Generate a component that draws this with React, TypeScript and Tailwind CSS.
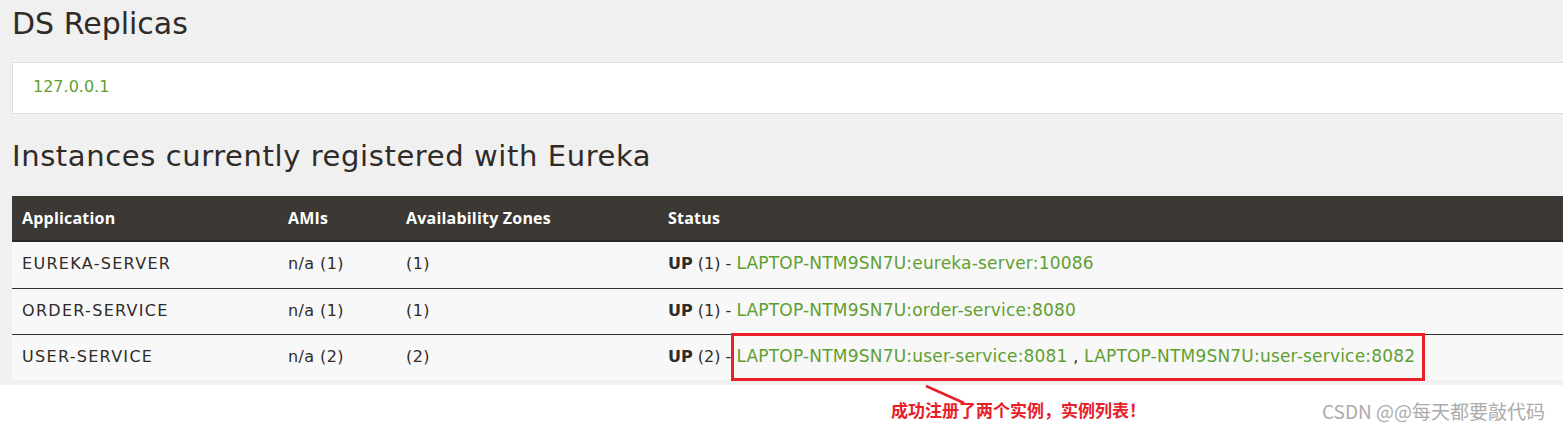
import React from "react";

const rows = [
  { app: "EUREKA-SERVER", amis: "n/a (1)", zones: "(1)", count: "(1)", links: ["LAPTOP-NTM9SN7U:eureka-server:10086"] },
  { app: "ORDER-SERVICE", amis: "n/a (1)", zones: "(1)", count: "(1)", links: ["LAPTOP-NTM9SN7U:order-service:8080"] },
  { app: "USER-SERVICE", amis: "n/a (2)", zones: "(2)", count: "(2)", links: ["LAPTOP-NTM9SN7U:user-service:8081", "LAPTOP-NTM9SN7U:user-service:8082"] },
];

export default function App() {
  return (
    <div className="relative w-[1563px] h-[430px] overflow-hidden bg-white">
      <div className="w-[1700px] h-[385px] bg-[#f0f0f0] pl-[12px] pt-[4px]">
        <h1 className="text-[30px] leading-[40px] text-[#2f2b28] font-['DejaVu_Sans',sans-serif]">DS Replicas</h1>
        <div className="mt-[18px] h-[52px] bg-white border border-[#dddddd] flex items-center pl-[20px] pb-[3px]">
          <span className="text-[16px] text-[#5f9f31] font-['DejaVu_Sans',sans-serif]">127.0.0.1</span>
        </div>
        <h2 className="mt-[22px] text-[29px] leading-[40px] tracking-[0.6px] text-[#2f2b28] font-['DejaVu_Sans',sans-serif]">Instances currently registered with Eureka</h2>
        <div className="mt-[20px] w-full">
          <div className="flex h-[46px] items-center bg-[#3c3833] border-b-2 border-[#2b2825] text-white font-bold text-[16px] tracking-[0.2px] font-['Open_Sans',sans-serif]">
            <div className="w-[266px] pl-[10px]">Application</div>
            <div className="w-[118px] pl-[10px]">AMIs</div>
            <div className="w-[262px] pl-[10px]">Availability Zones</div>
            <div className="pl-[10px]">Status</div>
          </div>
          {rows.map((r, i) => (
            <div
              key={r.app}
              className={`flex h-[46px] items-center pb-[2px] bg-[#f8f8f8] text-[16px] tracking-[0.4px] text-[#2f2b28] font-['DejaVu_Sans',sans-serif] ${i > 0 ? "border-t border-[#333333]" : ""}`}
            >
              <div className="w-[266px] pl-[10px] tracking-[1.3px]">{r.app}</div>
              <div className="w-[118px] pl-[10px]">{r.amis}</div>
              <div className="w-[262px] pl-[10px]">{r.zones}</div>
              <div className="pl-[10px] whitespace-nowrap">
                <span className="font-semibold tracking-[0px]">UP</span>
                <span className="tracking-[0px]">{" " + r.count + " - "}</span>
                {r.links.map((l, j) => (
                  <React.Fragment key={l}>
                    {j > 0 && <span> , </span>}
                    <span className="text-[#5f9f31] text-[17px] tracking-[0.2px]">{l}</span>
                  </React.Fragment>
                ))}
              </div>
            </div>
          ))}
        </div>
      </div>

      <div className="absolute left-[731px] top-[333px] w-[694px] h-[48px] border-[3px] border-[#e8202a]"></div>
      <svg className="absolute left-[920px] top-[382px]" width="50" height="26" viewBox="0 0 50 26">
        <path d="M6 4 L44 21" stroke="#e8202a" strokeWidth="2.5" fill="none" />
      </svg>
      <div className="absolute left-[891px] top-[398px] text-[17px] leading-[24px] font-bold text-[#e8202a] font-['Noto_Sans_CJK_SC',sans-serif]">
        成功注册了两个实例，实例列表！
      </div>
      <div className="absolute left-[1322px] top-[397px] text-[19px] leading-[28px] text-[#ababab] font-['Noto_Sans_CJK_SC',sans-serif]">
        CSDN @@每天都要敲代码
      </div>
    </div>
  );
}
